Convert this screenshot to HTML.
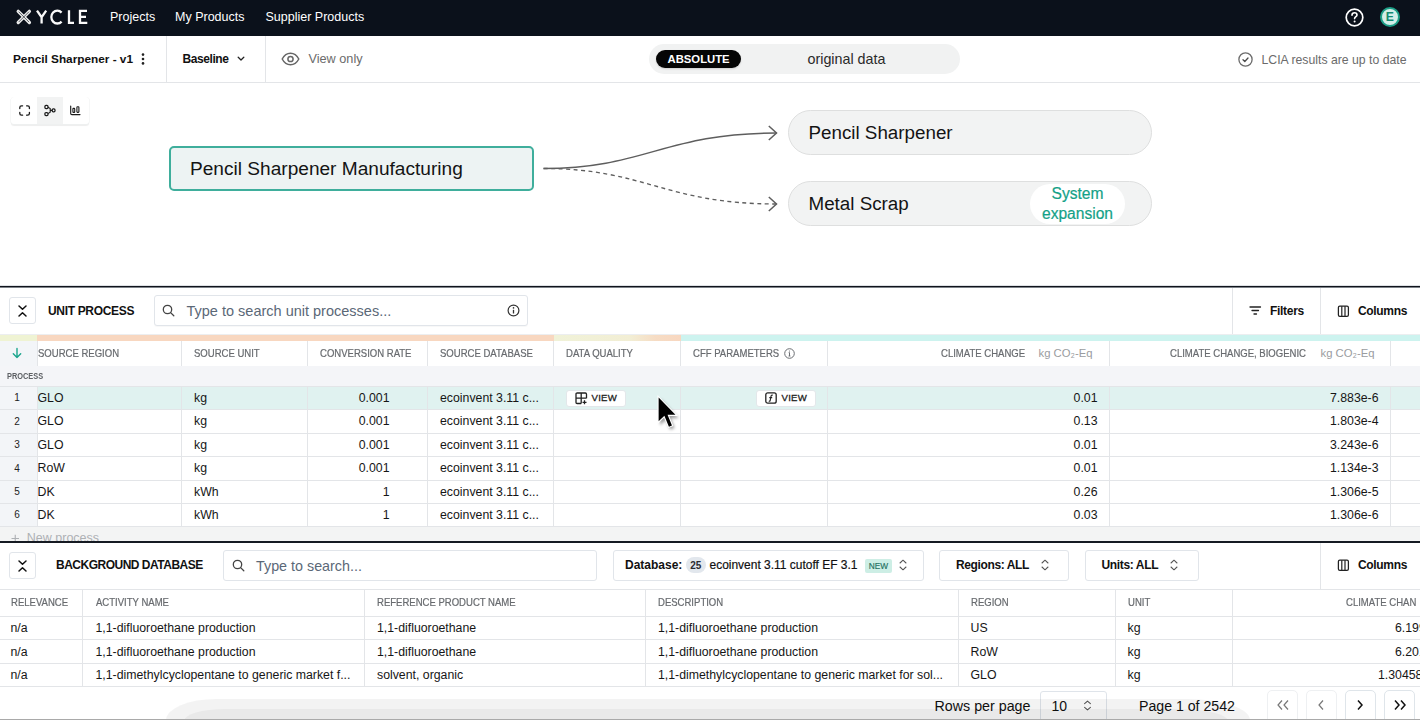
<!DOCTYPE html>
<html><head><meta charset="utf-8">
<style>
*{box-sizing:border-box;margin:0;padding:0}
html,body{width:1420px;height:720px;overflow:hidden;background:#fff;font-family:"Liberation Sans",sans-serif;color:#111}
.a{position:absolute}
.t{position:absolute;white-space:nowrap;line-height:1}
.vd{position:absolute;width:1px;background:#e3e5e8}
.hd{position:absolute;height:1px;background:#e3e5e8}
.nl{position:absolute;top:11.4px;color:#fff;font-size:12.5px;line-height:1}
.th{position:absolute;white-space:nowrap;line-height:1;font-size:10.6px;color:#696c70;transform:scaleX(0.9);transform-origin:0 0;-webkit-text-stroke:0.22px #66696d}
.td{position:absolute;white-space:nowrap;line-height:1;font-size:12.3px;color:#161616}
.tr{text-align:right}
svg{position:absolute;overflow:visible}
</style></head><body>

<!-- NAV -->
<div class="a" style="left:0;top:0;width:1420px;height:36px;background:#0b111b"></div>
<svg style="left:0;top:0" width="100" height="35" viewBox="0 0 100 35">
  <path d="M18.2 11.3 L29.4 22.5 M29.4 11.3 L18.2 22.5" stroke="#eee" stroke-width="3.3" stroke-linecap="round"/>
  <path d="M18.6 11.7 L29 22.1 M29 11.7 L18.6 22.1" stroke="#1a1f27" stroke-width="0.7"/>
  <path d="M37 10.6 L41.6 17.2 L46.2 10.6 M41.6 17.2 V23.6" fill="none" stroke="#fafafa" stroke-width="2.3"/>
  <path d="M61.6 12.6 A6 6.4 0 1 0 61.6 21.6" fill="none" stroke="#fafafa" stroke-width="2.3"/>
  <path d="M69 10.2 V22.8 H74" fill="none" stroke="#fafafa" stroke-width="2.3"/>
  <path d="M87 10.8 H80 V22.8 H87.3 M80 16.8 H86" fill="none" stroke="#fafafa" stroke-width="2.3"/>
</svg>
<div class="nl" style="left:110px">Projects</div>
<div class="nl" style="left:175px">My Products</div>
<div class="nl" style="left:265.5px">Supplier Products</div>
<svg style="left:1345px;top:7.5px" width="19" height="19" viewBox="0 0 19 19">
  <circle cx="9.5" cy="9.5" r="8.3" fill="none" stroke="#fff" stroke-width="1.7"/>
  <path d="M7 7.3 C7 5.6 8.2 4.8 9.5 4.8 C10.9 4.8 12 5.7 12 7 C12 8.6 9.6 8.8 9.6 10.6" fill="none" stroke="#fff" stroke-width="1.6" stroke-linecap="round"/>
  <circle cx="9.6" cy="13.6" r="1" fill="#fff"/>
</svg>
<div class="a" style="left:1379.5px;top:7px;width:20px;height:20px;border-radius:50%;background:#d3eee8;border:2.3px solid #1c9f87"></div>
<div class="t" style="left:1385.8px;top:10.9px;font-size:12.2px;font-weight:bold;color:#128a70">E</div>

<!-- BAR -->
<div class="hd" style="left:0;top:82px;width:1420px"></div>
<div class="t" style="left:13px;top:53.5px;font-size:11.8px;font-weight:bold;color:#111">Pencil Sharpener - v1</div>
<svg style="left:141px;top:53px" width="4" height="12" viewBox="0 0 4 12"><circle cx="2" cy="1.6" r="1.3" fill="#222"/><circle cx="2" cy="6" r="1.3" fill="#222"/><circle cx="2" cy="10.4" r="1.3" fill="#222"/></svg>
<div class="vd" style="left:166px;top:36px;height:46px"></div>
<div class="t" style="left:182.5px;top:53.2px;font-size:12px;letter-spacing:-0.42px;font-weight:bold;color:#111">Baseline</div>
<svg style="left:236px;top:55px" width="10" height="7" viewBox="0 0 10 7"><path d="M2.2 2.3 L5 5 L7.8 2.3" fill="none" stroke="#222" stroke-width="1.3" stroke-linecap="round" stroke-linejoin="round"/></svg>
<div class="vd" style="left:265px;top:36px;height:46px"></div>
<svg style="left:281px;top:52px" width="19" height="14" viewBox="0 0 19 14">
  <path d="M1.2 7 C3.5 2.6 6.5 1.2 9.5 1.2 C12.5 1.2 15.5 2.6 17.8 7 C15.5 11.4 12.5 12.8 9.5 12.8 C6.5 12.8 3.5 11.4 1.2 7 Z" fill="none" stroke="#666" stroke-width="1.5"/>
  <circle cx="9.5" cy="7" r="2.6" fill="none" stroke="#666" stroke-width="1.5"/>
</svg>
<div class="t" style="left:308.5px;top:53px;font-size:12.7px;color:#6b6b6b">View only</div>

<div class="a" style="left:649px;top:44px;width:311px;height:30px;border-radius:15px;background:#f1f2f2"></div>
<div class="a" style="left:656px;top:50px;width:85px;height:18px;border-radius:9px;background:#050505;box-shadow:0 1px 2px rgba(0,0,0,.15)"></div>
<div class="t" style="left:667.5px;top:54px;color:#fff;font-weight:bold;font-size:11.3px">ABSOLUTE</div>
<div class="t" style="left:807.5px;top:52px;font-size:14.3px;color:#2a2a2a">original data</div>

<svg style="left:1238px;top:52px" width="15" height="15" viewBox="0 0 15 15">
  <circle cx="7.5" cy="7.5" r="6.6" fill="none" stroke="#6b6b6b" stroke-width="1.3"/>
  <path d="M5 7.8 L6.8 9.5 L10 6" fill="none" stroke="#4a4a4a" stroke-width="1.3" stroke-linecap="round" stroke-linejoin="round"/>
</svg>
<div class="t" style="left:1261.5px;top:53.5px;font-size:12.25px;color:#6b6b6b">LCIA results are up to date</div>

<!-- CANVAS -->
<div class="a" style="left:11px;top:96.5px;width:77.5px;height:27.5px;border-radius:3px;background:#fff;box-shadow:0 0.5px 0 0.5px #eef0f0,0 1.5px 1px rgba(0,0,0,.07)"></div>
<div class="a" style="left:37px;top:96.5px;width:25.7px;height:27.5px;background:#f2f3f3"></div>
<svg style="left:0;top:0" width="100" height="130" viewBox="0 0 100 130">
  <path d="M19.8 108.6 V107.5 Q19.8 105.8 21.5 105.8 H22.6 M26.6 105.8 H27.7 Q29.4 105.8 29.4 107.5 V108.6 M29.4 112.4 V113.5 Q29.4 115.2 27.7 115.2 H26.6 M22.6 115.2 H21.5 Q19.8 115.2 19.8 113.5 V112.4" fill="none" stroke="#1b1b1b" stroke-width="1.3" stroke-linecap="round"/>
  <rect x="44.9" y="105.4" width="3.1" height="3.1" rx="1.1" fill="none" stroke="#1b1b1b" stroke-width="1.25"/>
  <rect x="44.9" y="112.5" width="3.1" height="3.1" rx="1.1" fill="none" stroke="#1b1b1b" stroke-width="1.25"/>
  <rect x="52.2" y="108.9" width="2.8" height="2.9" rx="1.1" fill="none" stroke="#1b1b1b" stroke-width="1.25"/>
  <path d="M48 107.3 L50.2 108.5 V112.3 L48 113.6 M50.2 110.4 H52.2" fill="none" stroke="#1b1b1b" stroke-width="1.1"/>
  <path d="M70.7 106 V113.4 Q70.7 114.6 71.9 114.6 H80" fill="none" stroke="#1b1b1b" stroke-width="1.15" stroke-linecap="round"/>
  <rect x="72.9" y="108.4" width="1.8" height="4" rx="0.5" fill="none" stroke="#1b1b1b" stroke-width="1.1"/>
  <rect x="76.9" y="106.8" width="2" height="5.6" rx="0.6" fill="none" stroke="#1b1b1b" stroke-width="1.1"/>
</svg>

<div class="a" style="left:168.5px;top:145.5px;width:365.5px;height:45.5px;border-radius:5px;background:#edf3f3;border:2px solid #3fae9c"></div>
<div class="t" style="left:190px;top:159px;font-size:19.1px;color:#141414">Pencil Sharpener Manufacturing</div>

<svg style="left:0;top:0" width="1420" height="720">
  <path d="M543.5 168.5 C 645 168.5, 665 133, 776.5 133" fill="none" stroke="#5e5e5e" stroke-width="1.5"/>
  <path d="M543.5 168.5 C 645 168.5, 665 204, 776.5 204" fill="none" stroke="#5e5e5e" stroke-width="1.35" stroke-dasharray="4 3.5"/>
  <path d="M768.8 126 L776.5 133 L768.8 140" fill="none" stroke="#5e5e5e" stroke-width="1.5"/>
  <path d="M768.8 197 L776.5 204 L768.8 211" fill="none" stroke="#5e5e5e" stroke-width="1.5"/>
</svg>

<div class="a" style="left:787.5px;top:110px;width:364px;height:45px;border-radius:23px;background:#f2f3f3;border:1px solid #dedfdf"></div>
<div class="t" style="left:808.5px;top:124px;font-size:18.8px;color:#141414">Pencil Sharpener</div>
<div class="a" style="left:787.5px;top:181px;width:364px;height:45px;border-radius:23px;background:#f2f3f3;border:1px solid #dedfdf"></div>
<div class="t" style="left:808.5px;top:195px;font-size:18.8px;color:#141414">Metal Scrap</div>
<div class="a" style="left:1030px;top:184px;width:95px;height:40px;border-radius:20px;background:#fff"></div>
<div class="t" style="left:1030px;top:184px;width:95px;text-align:center;font-size:15.6px;line-height:19.6px;color:#14a187;-webkit-text-stroke:0.2px #14a187;white-space:normal">System<br>expansion</div>

<!-- UNIT PROCESS SECTION -->
<div class="a" style="left:0;top:285px;width:1420px;height:1px;background:#dfe2e5"></div>
<div class="a" style="left:0;top:286px;width:1420px;height:1px;background:#0f141c"></div>
<div class="a" style="left:0;top:287px;width:1420px;height:1px;background:#7d8288"></div>
<div class="a" style="left:9px;top:297px;width:27px;height:27px;border-radius:3px;border:1px solid #e1e5ea;background:#fff"></div>
<svg style="left:17px;top:305px" width="11" height="12" viewBox="0 0 11 12">
  <path d="M2 1 L5.5 4.3 L9 1 M2 11 L5.5 7.7 L9 11" fill="none" stroke="#111" stroke-width="1.5" stroke-linecap="round" stroke-linejoin="round"/>
</svg>
<div class="t" style="left:48px;top:304.8px;font-size:12px;letter-spacing:-0.33px;font-weight:bold;color:#111">UNIT PROCESS</div>
<div class="a" style="left:153.5px;top:295px;width:374px;height:31px;border-radius:3px;border:1px solid #e1e5ea;background:#fff;box-shadow:0 1px 1px rgba(0,0,0,.03)"></div>
<svg style="left:162px;top:304px" width="13" height="13" viewBox="0 0 13 13">
  <circle cx="5.5" cy="5.5" r="4.2" fill="none" stroke="#444" stroke-width="1.3"/>
  <path d="M8.6 8.6 L11.8 11.8" stroke="#444" stroke-width="1.3" stroke-linecap="round"/>
</svg>
<div class="t" style="left:186.5px;top:304px;font-size:14.5px;color:#5b6877">Type to search unit processes...</div>
<svg style="left:507px;top:304px" width="13" height="13" viewBox="0 0 13 13">
  <circle cx="6.5" cy="6.5" r="5.4" fill="none" stroke="#333" stroke-width="1.2"/>
  <path d="M6.5 5.8 V9.5" stroke="#333" stroke-width="1.3"/>
  <circle cx="6.5" cy="3.9" r="0.8" fill="#333"/>
</svg>
<div class="vd" style="left:1232px;top:288px;height:47px"></div>
<svg style="left:1249px;top:305px" width="13" height="11" viewBox="0 0 13 11">
  <path d="M1 2 H11.5 M3 5.5 H9.5 M5 9 H7.5" stroke="#222" stroke-width="1.3" stroke-linecap="round"/>
</svg>
<div class="t" style="left:1270px;top:304.8px;font-size:12px;letter-spacing:-0.3px;font-weight:bold;color:#111">Filters</div>
<div class="vd" style="left:1320px;top:288px;height:47px"></div>
<svg style="left:1336.5px;top:304.5px" width="13" height="13" viewBox="0 0 13 13">
  <rect x="1.4" y="1.2" width="10" height="10.2" rx="1.4" fill="none" stroke="#222" stroke-width="1.25"/>
  <path d="M4.8 1.2 V11.4 M8 1.2 V11.4" stroke="#222" stroke-width="1.2"/>
</svg>
<div class="t" style="left:1358px;top:304.8px;font-size:12px;letter-spacing:-0.33px;font-weight:bold;color:#111">Columns</div>
<div class="a" style="left:0;top:335px;width:37px;height:6px;background:#eff3d3"></div>
<div class="hd" style="left:0;top:334px;width:1420px;background:#eceef0"></div>
<div class="a" style="left:37px;top:335px;width:517px;height:6px;background:#f8d7c0"></div>
<div class="a" style="left:554px;top:335px;width:127px;height:6px;background:linear-gradient(90deg,#f0f2d8 0%,#f2eed4 60%,#f6dcc4 80%,#f8d7c0 100%)"></div>
<div class="a" style="left:681px;top:335px;width:739px;height:6px;background:#cdf3ef"></div>
<div class="a" style="left:0;top:341px;width:37px;height:25px;background:#f3f5f8"></div>
<div class="hd" style="left:0;top:365.5px;width:1420px"></div>
<svg style="left:11px;top:347px" width="12" height="12" viewBox="0 0 12 12">
  <path d="M6 1.5 V10.5 M2.3 6.8 L6 10.5 L9.7 6.8" fill="none" stroke="#1aa58d" stroke-width="1.4" stroke-linecap="round" stroke-linejoin="round"/>
</svg>
<div class="th" style="left:37.5px;top:348px">SOURCE REGION</div>
<div class="th" style="left:194px;top:348px">SOURCE UNIT</div>
<div class="th" style="left:319.5px;top:348px">CONVERSION RATE</div>
<div class="th" style="left:440px;top:348px">SOURCE DATABASE</div>
<div class="th" style="left:565.5px;top:348px">DATA QUALITY</div>
<div class="th" style="left:693px;top:348px">CFF PARAMETERS</div>
<div class="th" style="left:940.5px;top:348px">CLIMATE CHANGE</div>
<div class="th" style="left:1170px;top:348px">CLIMATE CHANGE, BIOGENIC</div>
<svg style="left:783.5px;top:347.5px" width="11" height="11" viewBox="0 0 11 11">
  <circle cx="5.5" cy="5.5" r="4.8" fill="none" stroke="#6b6e72" stroke-width="1"/>
  <path d="M5.5 4.6 V8 M4.6 8 H6.4 M4.7 4.6 H5.5" stroke="#6b6e72" stroke-width="1"/>
  <circle cx="5.5" cy="3" r="0.6" fill="#6b6e72"/>
</svg>
<div class="t" style="left:1038.5px;top:347.5px;font-size:11.3px;color:#9a9ca0">kg CO₂-Eq</div>
<div class="t" style="left:1320.5px;top:347.5px;font-size:11.3px;color:#9a9ca0">kg CO₂-Eq</div>
<div class="a" style="left:0;top:366px;width:1420px;height:20px;background:#f4f5f8"></div>
<div class="hd" style="left:0;top:386px;width:1420px"></div>
<div class="t" style="left:7.2px;top:371.7px;font-size:8.6px;transform:scaleX(0.86);transform-origin:0 0;font-weight:bold;color:#5d6064">PROCESS</div>
<div class="a" style="left:37px;top:386.8px;width:1383px;height:22.9px;background:#e0f2f0"></div>
<div class="a" style="left:0;top:386.8px;width:37px;height:22.9px;background:#f3f5f8"></div>
<div class="hd" style="left:0;top:409.2px;width:1420px"></div>
<div class="t" style="left:0;width:34px;text-align:center;top:393.3px;font-size:10px;color:#222">1</div>
<div class="td" style="left:37.5px;top:392.0px">GLO</div>
<div class="td" style="left:194px;top:392.0px">kg</div>
<div class="td tr" style="left:300px;width:89.5px;top:392.0px">0.001</div>
<div class="td" style="left:440px;top:392.0px">ecoinvent 3.11 c...</div>
<div class="td tr" style="left:1000px;width:97.5px;top:392.0px">0.01</div>
<div class="td tr" style="left:1280px;width:98.5px;top:392.0px">7.883e-6</div>
<div class="a" style="left:37px;top:410.2px;width:1383px;height:22.9px;background:#fff"></div>
<div class="a" style="left:0;top:410.2px;width:37px;height:22.9px;background:#f3f5f8"></div>
<div class="hd" style="left:0;top:432.6px;width:1420px"></div>
<div class="t" style="left:0;width:34px;text-align:center;top:416.7px;font-size:10px;color:#222">2</div>
<div class="td" style="left:37.5px;top:415.4px">GLO</div>
<div class="td" style="left:194px;top:415.4px">kg</div>
<div class="td tr" style="left:300px;width:89.5px;top:415.4px">0.001</div>
<div class="td" style="left:440px;top:415.4px">ecoinvent 3.11 c...</div>
<div class="td tr" style="left:1000px;width:97.5px;top:415.4px">0.13</div>
<div class="td tr" style="left:1280px;width:98.5px;top:415.4px">1.803e-4</div>
<div class="a" style="left:37px;top:433.6px;width:1383px;height:22.9px;background:#fff"></div>
<div class="a" style="left:0;top:433.6px;width:37px;height:22.9px;background:#f3f5f8"></div>
<div class="hd" style="left:0;top:456.1px;width:1420px"></div>
<div class="t" style="left:0;width:34px;text-align:center;top:440.1px;font-size:10px;color:#222">3</div>
<div class="td" style="left:37.5px;top:438.8px">GLO</div>
<div class="td" style="left:194px;top:438.8px">kg</div>
<div class="td tr" style="left:300px;width:89.5px;top:438.8px">0.001</div>
<div class="td" style="left:440px;top:438.8px">ecoinvent 3.11 c...</div>
<div class="td tr" style="left:1000px;width:97.5px;top:438.8px">0.01</div>
<div class="td tr" style="left:1280px;width:98.5px;top:438.8px">3.243e-6</div>
<div class="a" style="left:37px;top:457.1px;width:1383px;height:22.9px;background:#fff"></div>
<div class="a" style="left:0;top:457.1px;width:37px;height:22.9px;background:#f3f5f8"></div>
<div class="hd" style="left:0;top:479.5px;width:1420px"></div>
<div class="t" style="left:0;width:34px;text-align:center;top:463.6px;font-size:10px;color:#222">4</div>
<div class="td" style="left:37.5px;top:462.3px">RoW</div>
<div class="td" style="left:194px;top:462.3px">kg</div>
<div class="td tr" style="left:300px;width:89.5px;top:462.3px">0.001</div>
<div class="td" style="left:440px;top:462.3px">ecoinvent 3.11 c...</div>
<div class="td tr" style="left:1000px;width:97.5px;top:462.3px">0.01</div>
<div class="td tr" style="left:1280px;width:98.5px;top:462.3px">1.134e-3</div>
<div class="a" style="left:37px;top:480.5px;width:1383px;height:22.9px;background:#fff"></div>
<div class="a" style="left:0;top:480.5px;width:37px;height:22.9px;background:#f3f5f8"></div>
<div class="hd" style="left:0;top:502.9px;width:1420px"></div>
<div class="t" style="left:0;width:34px;text-align:center;top:487.0px;font-size:10px;color:#222">5</div>
<div class="td" style="left:37.5px;top:485.7px">DK</div>
<div class="td" style="left:194px;top:485.7px">kWh</div>
<div class="td tr" style="left:300px;width:89.5px;top:485.7px">1</div>
<div class="td" style="left:440px;top:485.7px">ecoinvent 3.11 c...</div>
<div class="td tr" style="left:1000px;width:97.5px;top:485.7px">0.26</div>
<div class="td tr" style="left:1280px;width:98.5px;top:485.7px">1.306e-5</div>
<div class="a" style="left:37px;top:503.9px;width:1383px;height:22.9px;background:#fff"></div>
<div class="a" style="left:0;top:503.9px;width:37px;height:22.9px;background:#f3f5f8"></div>
<div class="hd" style="left:0;top:526.3px;width:1420px"></div>
<div class="t" style="left:0;width:34px;text-align:center;top:510.4px;font-size:10px;color:#222">6</div>
<div class="td" style="left:37.5px;top:509.1px">DK</div>
<div class="td" style="left:194px;top:509.1px">kWh</div>
<div class="td tr" style="left:300px;width:89.5px;top:509.1px">1</div>
<div class="td" style="left:440px;top:509.1px">ecoinvent 3.11 c...</div>
<div class="td tr" style="left:1000px;width:97.5px;top:509.1px">0.03</div>
<div class="td tr" style="left:1280px;width:98.5px;top:509.1px">1.306e-6</div>
<div class="vd" style="left:36.5px;top:341px;height:25px"></div>
<div class="vd" style="left:36.5px;top:386px;height:140.5px"></div>
<div class="vd" style="left:181px;top:341px;height:25px"></div>
<div class="vd" style="left:181px;top:386px;height:140.5px"></div>
<div class="vd" style="left:307px;top:341px;height:25px"></div>
<div class="vd" style="left:307px;top:386px;height:140.5px"></div>
<div class="vd" style="left:427px;top:341px;height:25px"></div>
<div class="vd" style="left:427px;top:386px;height:140.5px"></div>
<div class="vd" style="left:553px;top:341px;height:25px"></div>
<div class="vd" style="left:553px;top:386px;height:140.5px"></div>
<div class="vd" style="left:680px;top:341px;height:25px"></div>
<div class="vd" style="left:680px;top:386px;height:140.5px"></div>
<div class="vd" style="left:827px;top:341px;height:25px"></div>
<div class="vd" style="left:827px;top:386px;height:140.5px"></div>
<div class="vd" style="left:1109px;top:341px;height:25px"></div>
<div class="vd" style="left:1109px;top:386px;height:140.5px"></div>
<div class="vd" style="left:1390px;top:341px;height:25px"></div>
<div class="vd" style="left:1390px;top:386px;height:140.5px"></div>
<div class="a" style="left:566px;top:389.8px;width:59.5px;height:17px;border-radius:3px;background:#fff;border:1px solid #e3e7ea"></div>
<svg style="left:574.5px;top:392px" width="13" height="13" viewBox="0 0 13 13">
  <path d="M6.2 11.5 H2.2 Q1 11.5 1 10.3 V2.2 Q1 1 2.2 1 H10.3 Q11.5 1 11.5 2.2 V6.2 M1 6.2 H11.5 M6.2 1 V11.5" fill="none" stroke="#222" stroke-width="1.3"/>
  <path d="M9.5 8.3 V12.3 M7.5 10.3 H11.5" stroke="#222" stroke-width="1.3"/>
</svg>
<div class="t" style="left:591.5px;top:393px;font-size:9.6px;letter-spacing:0.25px;-webkit-text-stroke:0.3px #222;color:#222">VIEW</div>
<div class="a" style="left:756px;top:389.8px;width:59.5px;height:17px;border-radius:3px;background:#fff;border:1px solid #e3e7ea"></div>
<svg style="left:764.5px;top:392px" width="12" height="12" viewBox="0 0 12 12">
  <rect x="0.8" y="0.8" width="10.4" height="10.4" rx="2" fill="none" stroke="#222" stroke-width="1.3"/>
  <path d="M7.8 3.2 Q6.3 2.8 6 4.3 L5.2 8.5 Q4.9 9.6 3.8 9 M4.3 5.6 H7.2" fill="none" stroke="#222" stroke-width="1.1"/>
</svg>
<div class="t" style="left:781.5px;top:393px;font-size:9.6px;letter-spacing:0.25px;-webkit-text-stroke:0.3px #222;color:#222">VIEW</div>
<div class="a" style="left:0;top:526.5px;width:1420px;height:14px;background:#f3f4f4;overflow:hidden">
  <svg style="left:10.5px;top:7px" width="9" height="9" viewBox="0 0 9 9"><path d="M0.5 4.5 H8 M4.25 0.8 V8.5" stroke="#aeb1b4" stroke-width="1.1"/></svg>
  <div class="t" style="left:26.8px;top:5.5px;font-size:12.5px;color:#aeb1b4">New process</div>
</div>
<svg style="left:652px;top:393px" width="34" height="44" viewBox="0 0 34 44">
  <defs><filter id="cs" x="-50%" y="-50%" width="200%" height="200%"><feGaussianBlur stdDeviation="1.3"/></filter></defs>
  <g transform="translate(5.5,2) scale(1.13) translate(-5.5,-2)">
  <path d="M6.5 3.5 L6.5 27 L11.8 22 L15.4 31 L19.3 29.4 L15.8 20.8 L23 20.8 Z" fill="rgba(0,0,0,.38)" filter="url(#cs)" transform="translate(1.3,1.8)"/>
  <path d="M5.5 2 L5.5 27.5 L11.3 22.1 L15 31.3 L19.6 29.4 L15.9 20.5 L23.8 20.5 Z" fill="#fff"/>
  <path d="M6.5 4.3 L6.5 25.2 L11.6 20.4 L15.6 30 L18.3 28.9 L14.4 19.5 L21.4 19.5 Z" fill="#000"/>
  </g>
</svg>
<div class="a" style="left:0;top:541px;width:1420px;height:2px;background:#151a22"></div>
<div class="a" style="left:9px;top:552px;width:27px;height:27px;border-radius:3px;border:1px solid #e1e5ea;background:#fff"></div>
<svg style="left:17px;top:559.5px" width="11" height="12" viewBox="0 0 11 12">
  <path d="M2 1 L5.5 4.3 L9 1 M2 11 L5.5 7.7 L9 11" fill="none" stroke="#111" stroke-width="1.5" stroke-linecap="round" stroke-linejoin="round"/>
</svg>
<div class="t" style="left:56px;top:559.2px;font-size:12px;letter-spacing:-0.5px;font-weight:bold;color:#111">BACKGROUND DATABASE</div>
<div class="a" style="left:223px;top:550px;width:374px;height:31px;border-radius:3px;border:1px solid #e1e5ea;background:#fff"></div>
<svg style="left:232px;top:559px" width="13" height="13" viewBox="0 0 13 13">
  <circle cx="5.5" cy="5.5" r="4.2" fill="none" stroke="#444" stroke-width="1.3"/>
  <path d="M8.6 8.6 L11.8 11.8" stroke="#444" stroke-width="1.3" stroke-linecap="round"/>
</svg>
<div class="t" style="left:256px;top:559px;font-size:14.34px;color:#5b6877">Type to search...</div>
<div class="a" style="left:612.5px;top:550px;width:311px;height:31px;border-radius:3px;border:1px solid #e1e5ea;background:#fff"></div>
<div class="t" style="left:625px;top:559.4px;font-size:12px;font-weight:bold;color:#111">Database:</div>
<div class="a" style="left:686px;top:557px;width:19.5px;height:16px;border-radius:8px;background:#e2e7ed"></div>
<div class="t" style="left:686px;width:19.5px;text-align:center;top:561px;font-size:10px;font-weight:bold;color:#2a2d31">25</div>
<div class="t" style="left:709.5px;top:560px;font-size:11.97px;color:#111;-webkit-text-stroke:0.2px #111">ecoinvent 3.11 cutoff EF 3.1</div>
<div class="a" style="left:865px;top:559px;width:27px;height:13.5px;border-radius:2px;background:#cdeee5"></div>
<div class="t" style="left:865px;width:27px;text-align:center;top:562px;font-size:8.3px;color:#23705f;-webkit-text-stroke:0.15px #23705f">NEW</div>
<svg style="left:898px;top:559px" width="10" height="12" viewBox="0 0 10 12"><path d="M2 4 L5 1.2 L8 4 M2 8 L5 10.8 L8 8" fill="none" stroke="#555" stroke-width="1.05" stroke-linecap="round" stroke-linejoin="round"/></svg>
<div class="a" style="left:939px;top:550px;width:130px;height:31px;border-radius:3px;border:1px solid #e1e5ea;background:#fff"></div>
<div class="t" style="left:956px;top:559.4px;font-size:12px;letter-spacing:-0.38px;font-weight:bold;color:#111">Regions: ALL</div>
<svg style="left:1039.5px;top:559px" width="10" height="12" viewBox="0 0 10 12"><path d="M2 4 L5 1.2 L8 4 M2 8 L5 10.8 L8 8" fill="none" stroke="#555" stroke-width="1.05" stroke-linecap="round" stroke-linejoin="round"/></svg>
<div class="a" style="left:1085px;top:550px;width:114px;height:31px;border-radius:3px;border:1px solid #e1e5ea;background:#fff"></div>
<div class="t" style="left:1101.5px;top:559.4px;font-size:12px;letter-spacing:-0.36px;font-weight:bold;color:#111">Units: ALL</div>
<svg style="left:1169px;top:559px" width="10" height="12" viewBox="0 0 10 12"><path d="M2 4 L5 1.2 L8 4 M2 8 L5 10.8 L8 8" fill="none" stroke="#555" stroke-width="1.05" stroke-linecap="round" stroke-linejoin="round"/></svg>
<div class="vd" style="left:1320px;top:543px;height:46px"></div>
<svg style="left:1336.5px;top:559px" width="13" height="13" viewBox="0 0 13 13">
  <rect x="1.4" y="1.2" width="10" height="10.2" rx="1.4" fill="none" stroke="#222" stroke-width="1.25"/>
  <path d="M4.8 1.2 V11.4 M8 1.2 V11.4" stroke="#222" stroke-width="1.2"/>
</svg>
<div class="t" style="left:1358px;top:559.4px;font-size:12px;letter-spacing:-0.33px;font-weight:bold;color:#111">Columns</div>
<div class="hd" style="left:0;top:588.5px;width:1420px"></div>
<div class="hd" style="left:0;top:616px;width:1420px"></div>
<div class="th" style="left:10.5px;top:597.3px">RELEVANCE</div>
<div class="th" style="left:96px;top:597.3px">ACTIVITY NAME</div>
<div class="th" style="left:377px;top:597.3px">REFERENCE PRODUCT NAME</div>
<div class="th" style="left:658px;top:597.3px">DESCRIPTION</div>
<div class="th" style="left:970.5px;top:597.3px">REGION</div>
<div class="th" style="left:1127.5px;top:597.3px">UNIT</div>
<div class="th" style="left:1345.5px;top:597.3px">CLIMATE CHAN</div>
<div class="hd" style="left:0;top:639.2px;width:1420px"></div>
<div class="td" style="left:10.5px;top:622.3px">n/a</div>
<div class="td" style="left:95.5px;top:622.3px">1,1-difluoroethane production</div>
<div class="td" style="left:377px;top:622.3px">1,1-difluoroethane</div>
<div class="td" style="left:658px;top:622.3px">1,1-difluoroethane production</div>
<div class="td" style="left:970.5px;top:622.3px">US</div>
<div class="td" style="left:1127.5px;top:622.3px">kg</div>
<div class="td" style="left:1395px;top:622.3px">6.1996</div>
<div class="hd" style="left:0;top:662.6px;width:1420px"></div>
<div class="td" style="left:10.5px;top:645.8px">n/a</div>
<div class="td" style="left:95.5px;top:645.8px">1,1-difluoroethane production</div>
<div class="td" style="left:377px;top:645.8px">1,1-difluoroethane</div>
<div class="td" style="left:658px;top:645.8px">1,1-difluoroethane production</div>
<div class="td" style="left:970.5px;top:645.8px">RoW</div>
<div class="td" style="left:1127.5px;top:645.8px">kg</div>
<div class="td" style="left:1395px;top:645.8px">6.2012</div>
<div class="hd" style="left:0;top:686.1px;width:1420px"></div>
<div class="td" style="left:10.5px;top:669.2px">n/a</div>
<div class="td" style="left:95.5px;top:669.2px">1,1-dimethylcyclopentane to generic market f...</div>
<div class="td" style="left:377px;top:669.2px">solvent, organic</div>
<div class="td" style="left:658px;top:669.2px">1,1-dimethylcyclopentane to generic market for sol...</div>
<div class="td" style="left:970.5px;top:669.2px">GLO</div>
<div class="td" style="left:1127.5px;top:669.2px">kg</div>
<div class="td" style="left:1378px;top:669.2px">1.304580</div>
<div class="vd" style="left:82px;top:589px;height:97.5px"></div>
<div class="vd" style="left:364px;top:589px;height:97.5px"></div>
<div class="vd" style="left:645px;top:589px;height:97.5px"></div>
<div class="vd" style="left:958px;top:589px;height:97.5px"></div>
<div class="vd" style="left:1115px;top:589px;height:97.5px"></div>
<div class="vd" style="left:1232px;top:589px;height:97.5px"></div>

<div class="a" style="left:0;top:719px;width:1420px;height:1px;background:#a9a9a9"></div>
<div class="t" style="left:934.5px;top:699px;font-size:14.27px;color:#111">Rows per page</div>
<div class="a" style="left:1039.5px;top:690.5px;width:67.5px;height:35px;border-radius:3px;border:1px solid #dfe4ea;background:#fff"></div>
<div class="t" style="left:1051.5px;top:699px;font-size:14px;color:#111">10</div>
<svg style="left:1082.5px;top:700px" width="9" height="11" viewBox="0 0 9 11"><path d="M1.6 3.6 L4.5 1.1 L7.4 3.6 M1.6 7.4 L4.5 9.9 L7.4 7.4" fill="none" stroke="#555" stroke-width="1.05" stroke-linecap="round" stroke-linejoin="round"/></svg>
<div class="t" style="left:1139px;top:699px;font-size:14.15px;color:#111">Page 1 of 2542</div>
<div class="a" style="left:1267px;top:690px;width:30.5px;height:34px;border-radius:5px;border:1px solid #eef0f2;background:#fff"></div>
<div class="a" style="left:1306px;top:690px;width:30.5px;height:34px;border-radius:5px;border:1px solid #eef0f2;background:#fff"></div>
<div class="a" style="left:1345px;top:690px;width:30.5px;height:34px;border-radius:5px;border:1px solid #dfe5ea;background:#fff"></div>
<div class="a" style="left:1384px;top:690px;width:30.5px;height:34px;border-radius:5px;border:1px solid #dfe5ea;background:#fff"></div>
<svg style="left:1276px;top:699px" width="14" height="12" viewBox="0 0 14 12"><path d="M6 1.5 L2 6 L6 10.5 M12 1.5 L8 6 L12 10.5" fill="none" stroke="#777" stroke-width="1.2"/></svg>
<svg style="left:1316px;top:699px" width="10" height="12" viewBox="0 0 10 12"><path d="M7 1.5 L3 6 L7 10.5" fill="none" stroke="#777" stroke-width="1.2"/></svg>
<svg style="left:1355px;top:699px" width="10" height="12" viewBox="0 0 10 12"><path d="M3 1.5 L7 6 L3 10.5" fill="none" stroke="#111" stroke-width="1.5"/></svg>
<svg style="left:1393px;top:699px" width="14" height="12" viewBox="0 0 14 12"><path d="M2 1.5 L6 6 L2 10.5 M8 1.5 L12 6 L8 10.5" fill="none" stroke="#111" stroke-width="1.5"/></svg>
<div class="a" style="left:0;top:686.5px;width:1420px;height:33.5px;overflow:hidden;pointer-events:none">
  <div class="a" style="left:166px;top:12.5px;width:1084px;height:40px;background:rgba(0,8,8,0.047);border-radius:50px 62px 0 0/21px 21px 0 0"></div>
  <div class="a" style="left:184px;top:22px;width:1044px;height:40px;background:rgba(0,0,0,0.041);border-radius:40px 50px 0 0/12px 12px 0 0"></div>
</div>
<div class="a" style="left:0;top:719px;width:1420px;height:1px;background:#a9a9a9"></div>
</body></html>
